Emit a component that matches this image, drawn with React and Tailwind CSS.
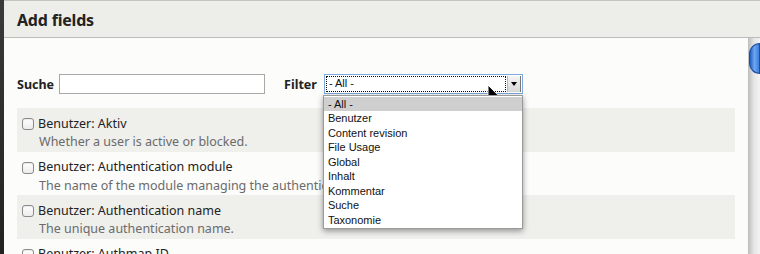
import React from 'react';

const fields = [
  { label: 'Benutzer: Aktiv', desc: 'Whether a user is active or blocked.' },
  { label: 'Benutzer: Authentication module', desc: 'The name of the module managing the authentication process.' },
  { label: 'Benutzer: Authentication name', desc: 'The unique authentication name.' },
  { label: 'Benutzer: Authmap ID', desc: 'The authmap ID.' },
];

const groups = ['- All -', 'Benutzer', 'Content revision', 'File Usage', 'Global', 'Inhalt', 'Kommentar', 'Suche', 'Taxonomie'];

const Checkbox = () => (
  <span className="inline-block w-[12px] h-[12px] rounded-[3px] border border-[#8a8a8a] bg-gradient-to-b from-white to-[#ececec] shadow-[inset_0_1px_1px_rgba(0,0,0,0.08)] shrink-0" />
);

const Cursor = () => (
  <svg className="absolute left-[487px] top-[84px] pointer-events-none" width="13" height="20" viewBox="0 0 13 20">
    <path d="M1 1 L1 16 L4.6 12.6 L7.2 18.6 L9.4 17.6 L6.9 11.8 L11.6 11.8 Z" fill="#000" stroke="#fff" strokeWidth="1" strokeLinejoin="round" />
  </svg>
);

export default function App() {
  return (
    <div className="relative w-[760px] h-[254px] overflow-hidden flex bg-[#2c2c2c] font-['Noto_Sans',sans-serif]">
      {/* window edge */}
      <div className="w-[4px] bg-gradient-to-b from-[#3a3a3a] to-[#222]" />

      <div className="flex-1 flex flex-col">
        {/* Title bar */}
        <div className="h-[38px] shrink-0 flex items-center px-[13px] pt-[2px] bg-[#edede9] border-t border-[#c4c4c2] border-b border-b-[#bdbdbb]">
          <h1 className="text-[16px] font-bold text-[#222] tracking-[-0.2px]">Add fields</h1>
        </div>

        <div className="flex-1 flex min-h-0">
          {/* Content */}
          <div className="flex-1 bg-[#fcfcfb] px-[13px] pt-[36px]">
            <div className="flex items-center h-[20px] text-[12.5px] text-[#222]">
              <span className="font-bold mr-[5px] pt-[3px]">Suche</span>
              <input className="w-[206px] h-[20px] border border-[#a8a8a8] bg-white outline-none" />
              <span className="font-bold ml-[19px] mr-[7px] pt-[3px]">Filter</span>

              <div className="relative">
                <div className="w-[199px] h-[20px] border border-[#7fa8dd] bg-white flex items-center p-[1px] -mt-[1px]">
                  <div className="flex-1 h-full border border-dotted border-[#111] flex items-center pl-[2px] font-['Liberation_Sans',sans-serif] text-[11px] text-[#111]">
                    - All -
                  </div>
                  <div className="w-[14px] h-full ml-[1px] flex items-center justify-center bg-gradient-to-b from-[#f4f4f4] to-[#d8d8d8] border-l border-[#b8b8b8] border-r border-r-[#777]">
                    <span className="w-0 h-0 border-l-[3.5px] border-r-[3.5px] border-t-[4px] border-l-transparent border-r-transparent border-t-black" />
                  </div>
                </div>

                {/* Open list */}
                <ul className="absolute left-[-1px] top-[20px] z-10 w-[200px] py-[1px] bg-white border border-[#9a9a9a] shadow-[0_2px_6px_rgba(0,0,0,0.4)] font-['Liberation_Sans',sans-serif] text-[11px] text-[#111]">
                  {groups.map((g, i) => (
                    <li key={g} className={`h-[14.5px] leading-[14.5px] pl-[4px] ${i === 0 ? 'bg-[#cfcfcf]' : ''}`}>
                      {g}
                    </li>
                  ))}
                </ul>
              </div>
            </div>

            {/* Field list */}
            <div className="mt-[14px] flex flex-col">
              {fields.map((f, i) => (
                <div key={f.label} className={`h-[43.5px] pt-[7px] pl-[5px] ${i % 2 === 0 ? 'bg-[#efefec]' : ''}`}>
                  <div className="flex items-center gap-[4px] h-[18px] text-[12.5px] text-[#222]">
                    <Checkbox />
                    <span>{f.label}</span>
                  </div>
                  <div className="h-[18px] leading-[18px] pl-[17px] text-[12.5px] text-[#6b6b6b] whitespace-nowrap">
                    {f.desc}
                  </div>
                </div>
              ))}
            </div>
          </div>

          {/* Scrollbar */}
          <div className="w-[12px] bg-gradient-to-r from-[#bdbdbd] via-[#e6e6e6] to-[#f3f3f3] pt-[5px] pl-[1px]">
            <div className="h-[31px] rounded-l-full bg-gradient-to-r from-[#1f5fc4] via-[#6ea6ee] to-[#3b7ee0] border border-[#1d4fa0]" />
          </div>
        </div>
      </div>

      <Cursor />
    </div>
  );
}
